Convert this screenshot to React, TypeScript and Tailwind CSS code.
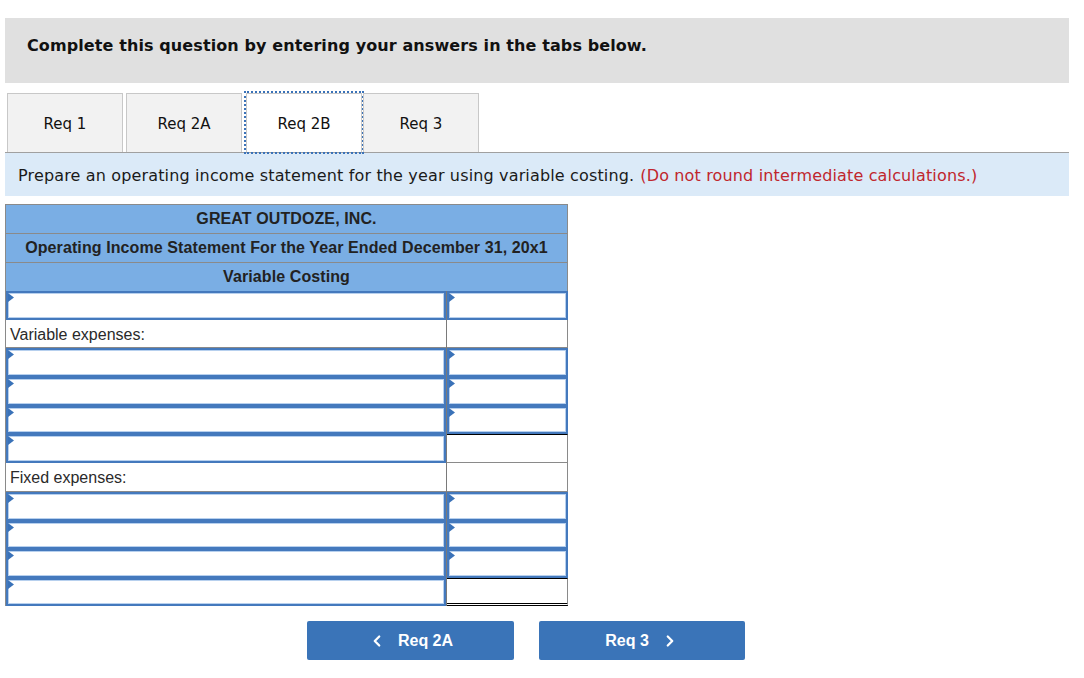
import React from 'react';
import { ChevronLeft, ChevronRight } from 'lucide-react';

type Cell = 'input' | 'plain' | 'total' | 'grand';

type Row = {
  h: string;
  label?: string;
  left: Cell;
  right: Cell;
};

const rows: Row[] = [
  { h: 'h-[29px]', left: 'input', right: 'input' },
  { h: 'h-[28px]', label: 'Variable expenses:', left: 'plain', right: 'plain' },
  { h: 'h-[29px]', left: 'input', right: 'input' },
  { h: 'h-[29px]', left: 'input', right: 'input' },
  { h: 'h-[28px]', left: 'input', right: 'input' },
  { h: 'h-[29px]', left: 'input', right: 'total' },
  { h: 'h-[29px]', label: 'Fixed expenses:', left: 'plain', right: 'plain' },
  { h: 'h-[29px]', left: 'input', right: 'input' },
  { h: 'h-[28px]', left: 'input', right: 'input' },
  { h: 'h-[29px]', left: 'input', right: 'input' },
  { h: 'h-[28px]', left: 'input', right: 'grand' },
];

const tabs = [
  { label: 'Req 1', active: false, cls: 'ml-0' },
  { label: 'Req 2A', active: false, cls: 'ml-[3px]' },
  { label: 'Req 2B', active: true, cls: 'ml-[4px]' },
  { label: 'Req 3', active: false, cls: 'ml-[1px]' },
];

function Flag() {
  return (
    <svg className="absolute left-0 top-0" width="7" height="10" viewBox="0 0 7 10">
      <polygon points="0,0 6,4.5 0,9" fill="#3a72b8" />
    </svg>
  );
}

function InputCell({ width }: { width: string }) {
  return (
    <div className={`relative h-full ${width} border-2 border-[#4479bd] shadow-[inset_0_0_0_1px_#b7d0ee] bg-white`}>
      <Flag />
    </div>
  );
}

function StatementRow({ row }: { row: Row }) {
  return (
    <div className={`flex ${row.h}`}>
      {row.left === 'input' ? (
        <InputCell width="w-[440px]" />
      ) : (
        <div className="h-full w-[440px] border-b border-[#8a8a8a] flex items-center pl-[4px] pt-[2px] text-[16px] text-[#2a2a2a]">
          {row.label}
        </div>
      )}
      <div className="w-px h-full bg-[#7a7a7a]" />
      {row.right === 'input' ? (
        <InputCell width="w-[121px]" />
      ) : row.right === 'total' ? (
        <div className="h-full w-[121px] border-t border-t-black border-b border-b-[#8a8a8a] border-r border-r-[#8a8a8a]" />
      ) : row.right === 'grand' ? (
        <div className="h-full w-[121px] border-t border-t-black border-b-[3px] border-double border-b-black border-r border-r-[#8a8a8a]" />
      ) : (
        <div className="h-full w-[121px] border-b border-r border-[#8a8a8a]" />
      )}
    </div>
  );
}

export default function App() {
  return (
    <div className="min-h-screen bg-white pt-[18px] pl-[5px]">
      {/* Header */}
      <div className="w-[1064px] h-[65px] bg-[#e0e0e0] pl-[22px] pt-[16px] font-['DejaVu_Sans',Verdana,sans-serif] text-[16px] tracking-[0.1px] font-bold text-[#111]">
        Complete this question by entering your answers in the tabs below.
      </div>

      {/* Tabs */}
      <div className="flex mt-[10px] pl-[2px] font-['DejaVu_Sans',Verdana,sans-serif] text-[15px] text-[#111]">
        {tabs.map((tab) => (
          <div
            key={tab.label}
            className={`${tab.cls} w-[116px] h-[59px] flex items-center justify-center pt-[2px] border border-b-0 border-[#c8c8c8] ${
              tab.active ? 'bg-white outline-2 outline-dotted outline-[#3a72b8]' : 'bg-[#f2f2f2]'
            }`}
          >
            {tab.label}
          </div>
        ))}
      </div>

      {/* Instructions */}
      <div className="w-[1064px] h-[44px] border-t border-[#a0a0a0] bg-[#dbeaf8] flex items-center pl-[13px] pt-[2px] font-['DejaVu_Sans',Verdana,sans-serif] text-[16px] tracking-[0.15px] text-[#1a1a1a]">
        <span>Prepare an operating income statement for the year using variable costing.</span>
        <span className="ml-[6px] text-[#c0262d]">(Do not round intermediate calculations.)</span>
      </div>

      {/* Statement */}
      <div className="mt-[8px] w-[563px] border-l border-t border-[#8a8a8a] font-['Liberation_Sans',Arial,sans-serif]">
        <div className="bg-[#7aaee4] text-[#222] font-bold text-[16px] tracking-[0.1px] border-r border-[#8a8a8a]">
          <div className="h-[29px] flex items-center justify-center border-b border-[#8a8a8a]">GREAT OUTDOZE, INC.</div>
          <div className="h-[29px] flex items-center justify-center border-b border-[#8a8a8a]">
            Operating Income Statement For the Year Ended December 31, 20x1
          </div>
          <div className="h-[28px] flex items-center justify-center">Variable Costing</div>
        </div>
        {rows.map((row, i) => (
          <StatementRow key={i} row={row} />
        ))}
      </div>

      {/* Navigation */}
      <div className="flex gap-[25px] mt-[15px] pl-[302px] font-['Liberation_Sans',Arial,sans-serif]">
        <button className="w-[207px] h-[39px] rounded-[2px] bg-[#3a74b8] text-white font-bold text-[16px] flex items-center justify-center">
          <ChevronLeft size={18} strokeWidth={3} className="mr-[12px]" />
          Req 2A
        </button>
        <button className="w-[206px] h-[39px] rounded-[2px] bg-[#3a74b8] text-white font-bold text-[16px] flex items-center justify-center">
          Req 3
          <ChevronRight size={18} strokeWidth={3} className="ml-[12px]" />
        </button>
      </div>
    </div>
  );
}
